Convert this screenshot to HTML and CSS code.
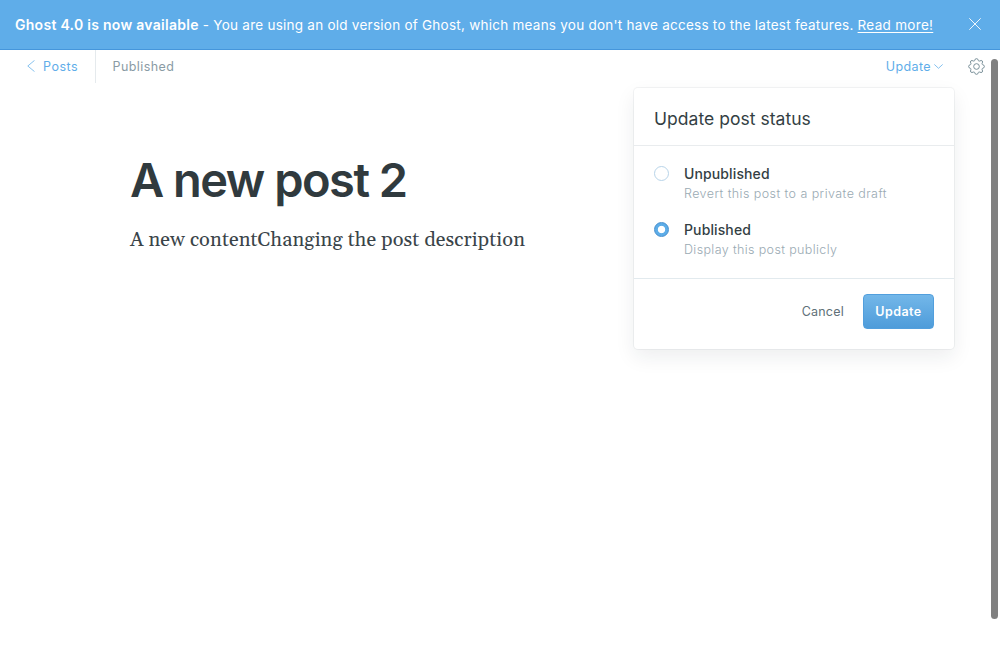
FILE: index.html
```html
<!DOCTYPE html>
<html lang="en">
<head>
<meta charset="utf-8">
<title>A new post 2</title>
<link rel="stylesheet" href="styles.css">
</head>
<body>
<div class="app">
  <aside class="alert">
    <div class="alert-text"><strong>Ghost 4.0 is now available</strong> - You are using an old version of Ghost, which means you don't have access to the latest features. <a class="alert-link" href="#">Read more!</a></div>
    <button class="alert-close" aria-label="Close"><svg width="12" height="12" viewBox="0 0 12 12"><path d="M0.3 0.3L11.7 11.7M11.7 0.3L0.3 11.7"/></svg></button>
  </aside>
  <header class="toolbar">
    <a class="back" href="#"><svg class="back-icon" width="8" height="12" viewBox="0 0 8 12"><path d="M7.5 0.4L0.8 6L7.5 11.6"/></svg>Posts</a>
    <div class="status">Published</div>
    <div class="actions">
      <div class="publish">
        <button class="publish-trigger">Update<svg class="caret" width="9" height="5" viewBox="0 0 9 5"><path d="M0.3 0.4L4.5 4.3L8.7 0.4"/></svg></button>
        <section class="menu">
          <h2 class="menu-title">Update post status</h2>
          <div class="options">
            <div class="option"><span class="radio"></span><div><div class="option-name">Unpublished</div><div class="option-note">Revert this post to a private draft</div></div></div>
            <div class="option"><span class="radio radio-on"></span><div><div class="option-name">Published</div><div class="option-note note-short">Display this post publicly</div></div></div>
          </div>
          <footer class="menu-footer"><button class="cancel">Cancel</button><button class="confirm">Update</button></footer>
        </section>
      </div>
      <button class="settings" aria-label="Settings"><svg width="17" height="17" viewBox="0 0 18 18"><circle cx="9" cy="9" r="3"/><path d="M7.6 1.2Q9 .2 10.4 1.2L10.8 2.6Q11.4 3.5 12.5 3.2L13.9 2.6Q15.5 2.8 15.5 4.3L14.9 5.6Q14.7 6.8 15.6 7.2L16.9 7.7Q17.8 9 16.9 10.3L15.6 10.8Q14.7 11.4 14.9 12.4L15.5 13.8Q15.3 15.4 13.8 15.4L12.5 14.9Q11.3 14.6 10.8 15.5L10.4 16.8Q9 17.8 7.6 16.8L7.2 15.5Q6.6 14.6 5.5 14.9L4.2 15.4Q2.6 15.2 2.6 13.8L3.1 12.4Q3.3 11.3 2.4 10.8L1.1 10.3Q.2 9 1.1 7.7L2.4 7.2Q3.4 6.7 3.1 5.6L2.5 4.3Q2.7 2.7 4.2 2.6L5.5 3.2Q6.7 3.4 7.2 2.6Z"/></svg></button>
    </div>
  </header>
  <main class="editor">
    <h1 class="post-title">A new post 2</h1>
    <p class="post-body">A new contentChanging the post description</p>
  </main>
  <div class="scrollbar"></div>
</div>
</body>
</html>
```
FILE: styles.css
```css
* { box-sizing: border-box; }
body { margin: 0; background: #fff; color: #343f44; font-family: Inter, sans-serif; font-size: 13px; letter-spacing: .2px; overflow: hidden; }
button { padding: 0; border: 0; background: none; font: inherit; letter-spacing: inherit; color: inherit; }
a { color: inherit; text-decoration: none; }
h1, h2, p { margin: 0; }
svg { display: block; fill: none; stroke: currentColor; }
.app { position: relative; height: 660px; }
.alert { display: flex; align-items: center; justify-content: space-between; height: 50px; padding: 0 19px 0 15px; background: #5fade9; border-bottom: 1px solid #4596dc; color: #fff; font-size: 13.5px; line-height: 20px; letter-spacing: .25px; white-space: nowrap; }
.alert-text strong { font-size: 14px; font-weight: 600; letter-spacing: .28px; }
.alert-link { text-decoration: underline; text-underline-offset: 2px; letter-spacing: .3px; }
.alert-close { margin-top: -2px; }
.alert-close svg { stroke-width: .9; }
.back-icon, .caret { stroke-width: .75; }
.toolbar { display: flex; height: 33px; line-height: 33px; }
.back { display: flex; align-items: center; width: 96px; padding-left: 27px; border-right: 1px solid #e5eaed; color: #5fade9; font-size: 12.5px; letter-spacing: .5px; }
.back-icon { margin: -1px 8px 0 0; }
.status { padding-left: 16.5px; color: #8a9ba5; font-size: 12.5px; letter-spacing: .42px; }
.actions { display: flex; margin-left: auto; padding-right: 15px; }
.publish { position: relative; margin-right: 25px; }
.publish-trigger { display: flex; align-items: center; height: 33px; color: #5fade9; font-size: 12.5px; letter-spacing: .38px; }
.caret { margin-left: 3px; }
.settings { display: flex; align-items: center; height: 32px; color: #738a94; }
.menu { position: absolute; top: 38px; right: -11px; width: 320px; height: 261px; border-radius: 4px; background: #fff; box-shadow: 0 0 0 1px rgba(99,114,130,.08), 0 8px 20px rgba(27,39,51,.08); }
.menu-title { height: 58px; padding: 0 20px; border-bottom: 1px solid #e9ecee; font-size: 17.5px; line-height: 61px; font-weight: 400; letter-spacing: .03px; }
.options { display: grid; gap: 16px; height: 133px; padding: 18px 20px; align-content: start; border-bottom: 1px solid #e2eaee; }
.option { display: flex; gap: 15px; height: 40px; line-height: 20px; }
.radio { width: 15px; height: 15px; margin-top: 2px; border: 1px solid #b8d4e9; border-radius: 50%; }
.radio-on { border-color: #468fce; background: radial-gradient(circle, #fff 3.3px, #5dade8 4.1px); }
.option-name { font-size: 14px; font-weight: 500; letter-spacing: .12px; }
.option-note { color: #9aaab3; font-size: 12.5px; font-weight: 300; letter-spacing: .43px; }
.note-short { letter-spacing: .37px; }
.menu-footer { display: flex; justify-content: flex-end; padding: 15px 20px; gap: 19px; }
.cancel { color: #607078; height: 35px; font-size: 12.5px; letter-spacing: .23px; }
.confirm { width: 71px; height: 35px; border: 1px solid #529fdd; border-radius: 4px; background: linear-gradient(#73b7e9, #4e9cda); color: #fff; font-size: 12.5px; letter-spacing: .45px; font-weight: 600; }
.editor { padding: 67px 130px 0; }
.post-title { font-size: 47px; line-height: 60px; font-weight: 600; letter-spacing: -1.5px; color: #303a3e; }
.post-body { margin-top: 14px; font-family: Georgia, Gelasio, "Liberation Serif", serif; font-size: 20px; line-height: 32px; letter-spacing: .1px; color: #3a4449; }
.scrollbar { position: absolute; top: 59px; right: 2px; width: 7px; height: 560px; border-radius: 4px; background: #808080; }
```
